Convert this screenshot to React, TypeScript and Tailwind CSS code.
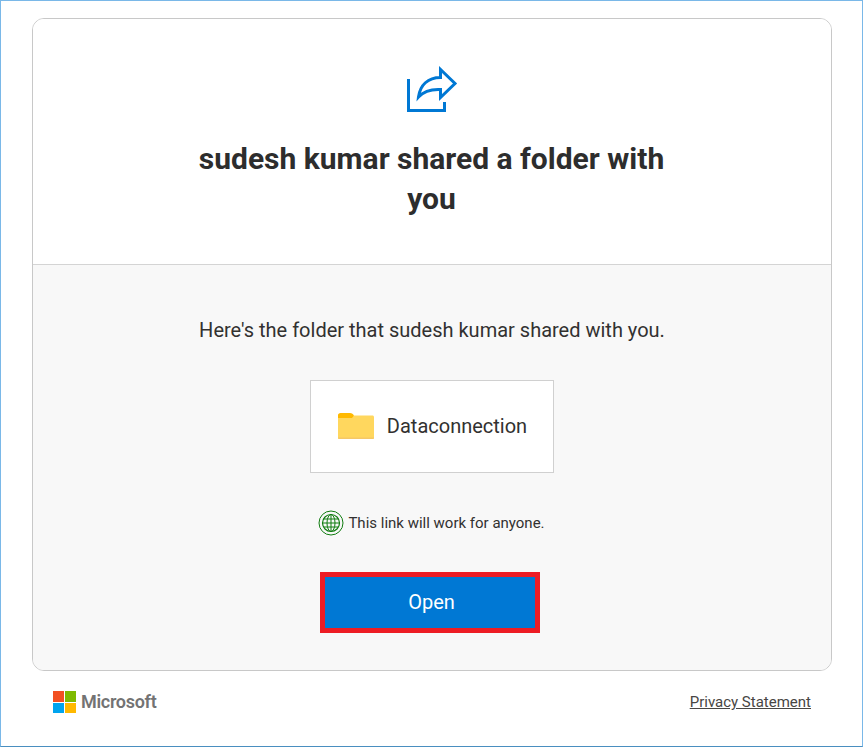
const ShareIcon = () => (
  <svg width="52" height="48" viewBox="0 0 52 48" fill="none" className="block">
    <path d="M2.5 13V44.5H38.5V36" stroke="#0078d4" strokeWidth="3" />
    <path
      d="M12.5 31C14 19 22 11.5 34.5 11.5V3.5L49 17.5L34.5 31.5V23.5C25 23 18 25 12.5 31Z"
      stroke="#0078d4"
      strokeWidth="3"
      strokeLinejoin="miter"
    />
  </svg>
);

const FolderIcon = () => (
  <svg width="36" height="26" viewBox="0 0 36 26" className="block">
    <path d="M0 2C0 1 1 0 2.5 0H12C14 0 15 1 16 2.5V5H0Z" fill="#ffb900" />
    <path d="M0 5H14L16 2.5H34.5C35.3 2.5 36 3.2 36 4V24.5C36 25.5 35.3 26 34.5 26H1.5C0.7 26 0 25.5 0 24.5Z" fill="#ffd75e" />
    <path d="M0 24.5H36C36 25.5 35.3 26 34.5 26H1.5C0.7 26 0 25.5 0 24.5Z" fill="#f5c866" />
  </svg>
);

const GlobeIcon = () => (
  <svg width="26" height="26" viewBox="0 0 26 26" fill="none" stroke="#107c10" className="block">
    <circle cx="13" cy="13" r="12" strokeWidth="1" />
    <circle cx="13" cy="13" r="8.5" strokeWidth="1.2" />
    <ellipse cx="13" cy="13" rx="4" ry="8.5" strokeWidth="1" />
    <path d="M13 4.5V21.5M4.5 13H21.5M5.6 9H20.4M5.6 17H20.4" strokeWidth="1" />
  </svg>
);

const MicrosoftLogo = () => (
  <div className="grid grid-cols-[11px_11px] grid-rows-[11px_10px] gap-px">
    <div className="bg-[#f25022]" />
    <div className="bg-[#7fba00]" />
    <div className="bg-[#00a4ef]" />
    <div className="bg-[#ffb900]" />
  </div>
);

export default function App() {
  return (
    <div className="h-[747px] w-[863px] border border-[#7ab8e8] border-b-[#4a8fc0] bg-white pt-[17px] pr-[30px] pl-[31px] font-['Roboto',sans-serif]">
      <div className="overflow-hidden rounded-xl border border-[#c8c8c8]">
        <div className="flex h-[246px] flex-col items-center border-b border-[#d4d4d4] bg-white pt-[47px]">
          <ShareIcon />
          <h1 className="mt-[25px] w-[480px] pr-[1px] text-center text-[30px] leading-[40px] font-bold text-[#2d2d2d]">
            sudesh kumar shared a folder with you
          </h1>
        </div>
        <div className="flex h-[405px] flex-col items-center bg-[#f8f8f8] pt-[51px]">
          <p className="text-[20px] leading-[28px] text-[#323130]">
            Here's the folder that sudesh kumar shared with you.
          </p>
          <div className="mt-[36px] flex h-[93px] w-[244px] items-center justify-center gap-[13px] border border-[#d0d0d0] bg-white pb-[1px] pl-[1px]">
            <FolderIcon />
            <span className="text-[20px] leading-[28px] text-[#323130]">Dataconnection</span>
          </div>
          <div className="mt-[37px] flex items-center gap-[4px] pr-[1px]">
            <GlobeIcon />
            <span className="text-[15px] leading-[20px] text-[#323130]">This link will work for anyone.</span>
          </div>
          <button className="mt-[36px] -ml-[4px] h-[61px] w-[220px] border-[5px] border-[#ed1c24] bg-[#0078d4] pb-[2px] pl-[3px] text-[20px] font-normal text-white">
            Open
          </button>
        </div>
      </div>
      <div className="flex items-center justify-between pt-[19px] pr-[21px] pl-[21px]">
        <div className="flex items-center gap-[5px]">
          <MicrosoftLogo />
          <span className="text-[18px] leading-[24px] font-semibold tracking-[-0.3px] text-[#737373]">Microsoft</span>
        </div>
        <a className="text-[15px] leading-[20px] text-[#484644] underline">Privacy Statement</a>
      </div>
    </div>
  );
}
